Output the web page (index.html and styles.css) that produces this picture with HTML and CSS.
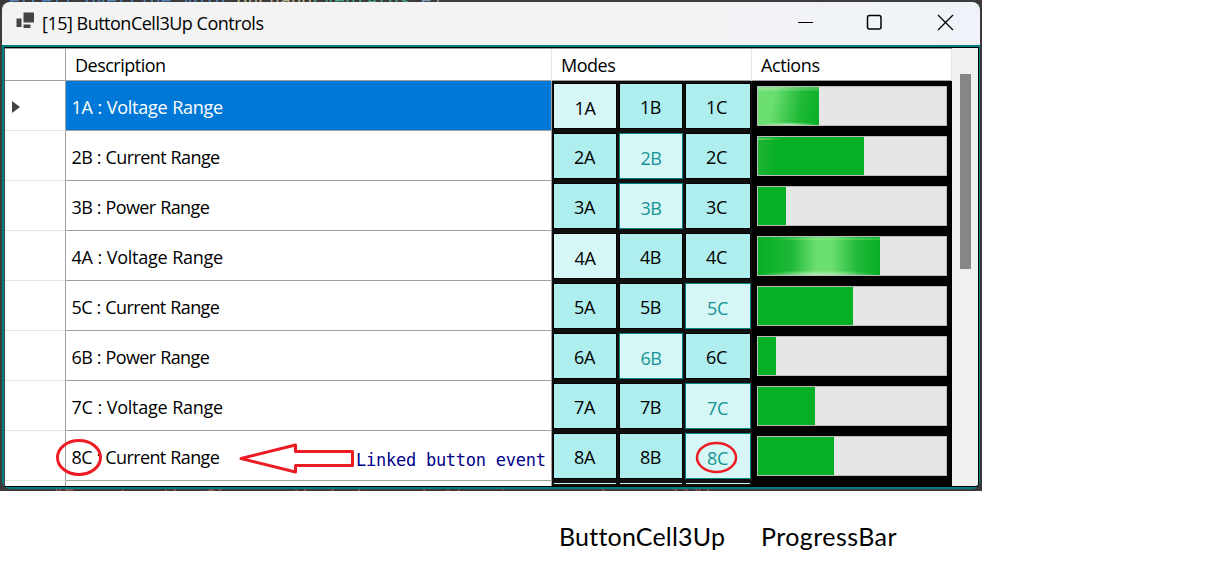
FILE: index.html
```html
<!DOCTYPE html>
<html lang="en">
<head>
<meta charset="utf-8">
<title>ButtonCell3Up Controls</title>
<link rel="stylesheet" href="styles.css">
</head>
<body>
<main class="desktop">
  <div class="code code-top"><span class="blue">erCell override void</span> <span class="sand">OnChang</span><span class="green">EventArgs</span> e)</div>
  <section class="window">
    <header class="titlebar">
      <svg class="app-icon" width="20" height="20" viewBox="0 0 20 20"><path d="M.5 6.500h5v8.500h-5zM7.500.500h10.500v10H7.500zM7.500 12.500h7v3.500h-7z" fill="#444"/></svg>
      <h1 class="title">[15] ButtonCell3Up Controls</h1>
      <svg class="controls" width="170" height="30" viewBox="0 0 170 30" fill="none" stroke="#000"><path d="M8 14.500h15"/><rect x="77.500" y="7.500" width="13.500" height="13.500" rx="2" stroke-width="1.500"/><path d="M148 7l15 15M163 7l-15 15" stroke-width="1.300"/></svg>
    </header>
    <div class="client">
      <div class="grid">
        <div class="head"><span class="corner"></span><span class="col desc-head">Description</span><span class="col modes-head">Modes</span><span class="col actions-head">Actions</span></div>
        <div id="rows"></div>
        <div class="row partial"><span class="row-head"></span><span class="desc"></span><span class="modes"><i></i><i></i><i></i></span><span class="actions"></span></div>
      </div>
      <div class="scroll"><div class="thumb"></div></div>
    </div>
  </section>
  <div class="code code-bottom">"Executes the Clear method when a button is pressed on cell")</div>
  <svg class="notes" width="982" height="491" fill="none" stroke="#ed1c24" stroke-width="3"><ellipse cx="79" cy="457.500" rx="21.500" ry="17"/><ellipse cx="716.500" cy="457.500" rx="19.500" ry="14.500" stroke-width="2.500"/><path d="M241 458.500L295.500 445v6.500H352.500V465.500H295.500V472z" stroke-linejoin="round"/></svg>
  <span class="linked">Linked button event</span>
</main>
<footer class="captions"><span class="cap-button">ButtonCell3Up</span><span class="cap-progress">ProgressBar</span></footer>
<script src="rows.js"></script>
</body>
</html>
```
FILE: styles.css
```css
* { box-sizing: border-box; }
body { margin: 0; background: #fff; color: #000; font-family: "Open Sans", "Noto Sans", sans-serif; }
.desktop { position: relative; width: 982px; height: 491px; padding: 2px; background: #3b393a; overflow: hidden; }
.code { position: absolute; overflow: hidden; height: 3px; white-space: pre; font: 18px/20px "DejaVu Sans Mono", monospace; }
.code-top { left: 9px; top: 0; width: 487px; line-height: 0; color: #7f9ab0; }
.blue { color: #4f87b8; }
.sand { color: #b8b28d; }
.green { color: #45a48b; }
.code-bottom { left: 53px; top: 489px; height: 2px; width: 660px; line-height: 14px; color: #8a6052; }
.window { position: relative; display: flex; flex-direction: column; width: 978px; height: 487px; border-radius: 8px; overflow: hidden; background: #008080; }
.titlebar { display: flex; align-items: center; height: 43px; flex: none; padding-left: 14px; background: linear-gradient(90deg, #f3f3f3 60%, #eff3f9); }
.app-icon { margin-top: -4px; }
.title { flex: 1; margin: 0 0 2px 6px; font-size: 18px; font-weight: 400; line-height: 26px; letter-spacing: -.5px; white-space: nowrap; }
.controls { margin: -2px 20px 0 0; }
.client { display: flex; margin: 2px 1px 2px 2px; height: 440px; padding-right: 1px; border-top: 1px solid #000; border-bottom: 1px solid #000; border-left: 1px solid #444; background: #000; overflow: hidden; }
.grid { width: 947px; height: 438px; overflow: hidden; border-top: 1px solid #a0a0a0; background: #fff; }
.head, .row { display: grid; grid-template-columns: 61px 486px 200px 200px; }
.head { height: 32px; border-bottom: 1px solid #a0a0a0; }
.corner { border-right: 1px solid #a0a0a0; }
.col { padding-left: 9px; font-size: 18px; line-height: 33px; letter-spacing: -.5px; border-right: 1px solid #e5e5e5; }
.actions-head { letter-spacing: -.4px; }
.row { height: 50px; }
.row-head { display: flex; align-items: center; padding: 2px 0 0 7px; border-right: 1px solid #a0a0a0; border-bottom: 1px solid #e3e3e3; }
.desc { display: flex; align-items: center; padding: 2px 0 0 5.5px; font-size: 18px; letter-spacing: -.6px; word-spacing: .5px; font-kerning: none; white-space: nowrap; border-right: 1px solid #a0a0a0; border-bottom: 1px solid #a0a0a0; }
.desc.voltage { letter-spacing: -.28px; }
.selected .desc { color: #fff; background: #0078d7; }
.modes { display: grid; grid-template-columns: 64px 64px 66px; column-gap: 2px; padding: 2px 0 0 1px; background: #101010; }
.cell { height: 46px; padding-right: 1px; border: 1px solid #000; background: #afeeee; text-align: center; font-size: 18px; line-height: 46px; letter-spacing: -.4px; }
.cell:last-child { padding-right: 3px; }
.cell.checked { background: #d7f6f6; line-height: 48px; padding-right: 0; }
.cell.checked:last-child { padding-right: 1px; }
.cell.accent { color: #149494; border-color: #008080; }
.actions { padding: 5px; background: #000; }
.bar { height: 40px; width: 190px; border: 1px solid #bcbcbc; background: #e6e6e6; }
.fill { height: 38px; background: #06b025; }
.glow-left { background: linear-gradient(180deg, #ffffff33 3px, transparent 4px), radial-gradient(ellipse 30px 3px at 50% 100%, #bff0bd, transparent), linear-gradient(100deg, #6fe073 0, #6ade70 26%, #20b936 68%, #06b025); }
.glow-edge { background: linear-gradient(90deg, #62d667, transparent 24px) 0 1px / 24px 2px no-repeat, linear-gradient(90deg, #20b536, #06b025 18px); }
.glow-mid { background: linear-gradient(90deg, transparent 10%, #86f08a99 50%, #45d25599) 0 1px / 100% 2px no-repeat, radial-gradient(ellipse 58px 5px at 50% 100%, #b3efb0, transparent), linear-gradient(90deg, #06b025, #20b838 28%, #6cdf71 48%, #6cdf71 60%, #20b838 82%, #06b025); }
.partial .modes i { height: 1px; margin: 0 1px; background: #d0f6f6; }
.scroll { width: 26px; padding: 26px 0 0 8px; background: #f0f0f0; border-bottom-right-radius: 2px; }
.thumb { width: 11px; height: 195px; background: #868686; }
.notes { position: absolute; left: 0; top: 0; }
.linked { position: absolute; left: 356px; top: 448px; color: #00008b; font: 17px/24px "DejaVu Sans Mono", monospace; letter-spacing: -.25px; white-space: nowrap; }
.captions { display: flex; padding: 28px 0 0 559px; font: 25px/34px Lato, sans-serif; letter-spacing: .2px; font-variant-ligatures: none; }
.cap-button { width: 202px; }
.cap-progress { letter-spacing: .45px; }
```
FILE: rows.js
```js
const rows = [
  ["A", "Voltage", 61, "glow-left"],
  ["B", "Current", 106, "glow-edge"],
  ["B", "Power", 28, ""],
  ["A", "Voltage", 122, "glow-mid"],
  ["C", "Current", 95, ""],
  ["B", "Power", 18, ""],
  ["C", "Voltage", 57, ""],
  ["C", "Current", 76, ""]
];
document.getElementById("rows").innerHTML = rows.map(([mode, name, width, glow], i) => {
  const n = i + 1;
  const cells = ["A", "B", "C"].map(m =>
    `<span class="cell${m === mode ? " checked" : ""}${m === mode && m !== "A" ? " accent" : ""}">${n}${m}</span>`).join("");
  const arrow = i === 0 ? '<svg width="9" height="14"><path d="M0 1v12l8-6z" fill="#444"/></svg>' : "";
  return `<div class="row${i === 0 ? " selected" : ""}"><span class="row-head">${arrow}</span><span class="desc ${name.toLowerCase()}">${n}${mode} : ${name} Range</span><span class="modes">${cells}</span><span class="actions"><div class="bar"><div class="fill ${glow}" style="width:${width}px"></div></div></span></div>`;
}).join("");
```
